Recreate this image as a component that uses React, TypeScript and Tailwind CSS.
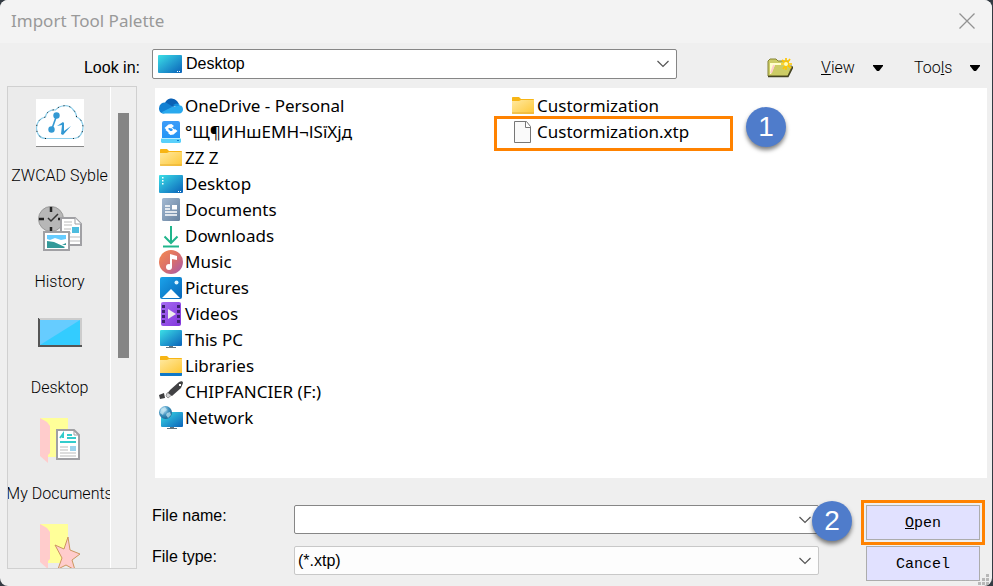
import type { ReactNode } from "react";

function Chevron() {
    return (
        <svg className="absolute right-2 top-1/2 -mt-1 h-2 w-3 pointer-events-none" viewBox="0 0 12 8" fill="none" stroke="#555" strokeWidth="1.2">
            <path d="M.5 1 6 6.500 11.500 1" />
        </svg>
    );
}

function Caret() {
    return (
        <svg className="h-[6px] w-[10px]" viewBox="0 0 10 6">
            <path d="M0 0h10v1L6 6H4L0 1z" fill="#000" />
        </svg>
    );
}

function Badge({ children, className }: { children: ReactNode; className: string }) {
    return (
        <span className={`absolute z-10 flex size-10 items-center justify-center rounded-full bg-[#4f7ccb] text-[28px] leading-10 text-white shadow-[0_3px_4px_rgba(0,0,0,0.5)] ${className}`}>
            {children}
        </span>
    );
}

function Gradients() {
    return (
        <svg className="absolute size-0" aria-hidden="true">
            <defs>
                <linearGradient id="screen" x1="0" y1="0" x2="1" y2="1">
                    <stop offset="0" stopColor="#3be0e6" />
                    <stop offset=".5" stopColor="#239fd1" />
                    <stop offset="1" stopColor="#0a62b8" />
                </linearGradient>
                <linearGradient id="folder" x1="0" y1="0" x2="1" y2="1">
                    <stop offset="0" stopColor="#ffe9a0" />
                    <stop offset="1" stopColor="#fdc736" />
                </linearGradient>
                <linearGradient id="music" x1="0" y1="0" x2="1" y2="1">
                    <stop offset="0" stopColor="#f58a50" />
                    <stop offset=".5" stopColor="#da7069" />
                    <stop offset="1" stopColor="#a658b0" />
                </linearGradient>
                <linearGradient id="pictures" x1="0" y1="0" x2="1" y2="1">
                    <stop offset="0" stopColor="#1ba3ea" />
                    <stop offset="1" stopColor="#0866b8" />
                </linearGradient>
                <linearGradient id="video" x1="0" y1="0" x2="1" y2="1">
                    <stop offset="0" stopColor="#a66bf2" />
                    <stop offset="1" stopColor="#8236dc" />
                </linearGradient>
                <linearGradient id="document" x1="0" y1="0" x2="1" y2="1">
                    <stop offset="0" stopColor="#a3b9d2" />
                    <stop offset="1" stopColor="#67829f" />
                </linearGradient>
                <linearGradient id="drive" x1="0" y1="0" x2="0" y2="1">
                    <stop offset="0" stopColor="#3e9cf8" />
                    <stop offset="1" stopColor="#1b93f5" />
                </linearGradient>
                <radialGradient id="globe" cx=".35" cy=".3" r=".8">
                    <stop offset="0" stopColor="#c9eafa" />
                    <stop offset=".5" stopColor="#3f91bd" />
                    <stop offset="1" stopColor="#125b8c" />
                </radialGradient>
            </defs>
        </svg>
    );
}

const icons: Record<string, ReactNode> = {
    onedrive: (
        <>
            <path d="M6 9a7 7 0 0 1 12-2l2 3-6 3-9-3z" fill="#0a61b5" />
            <path d="M7 8.500a6 6 0 0 0-7 6c0 3 2 5 5 5l10-6z" fill="#1180d3" />
            <path d="m14 11 3-1.500a5 5 0 0 1 4 1.500l-2 3z" fill="#1590df" />
            <path d="m3 18 10-5 8-1.500c2 0 3 2 3 4 0 2-1.500 4-4 4H5c-1 0-2-.5-2-1.500z" fill="#29a9ee" />
        </>
    ),
    drive: (
        <>
            <rect x="3" y="1" width="18" height="21" rx="2" fill="url(#drive)" />
            <path d="M2 18h20v4l-1 1H3l-1-1z" fill="#59d0fb" />
            <path d="M2 18h20v1H2z" fill="#b5ecff" />
            <path d="m12.500 4 2.500 2-2.500 2H10l-2 2-2.500-2 4-3.500zM11.500 15 9 13l2.500-2H14l2-2 2.500 2-4 3.500z" fill="#fff" />
            <path d="m12.500 7 4.500 4-1.500 1.500-4.500-4zM8 8l5 4.500-1.500 1.500-5-4z" fill="#fff" />
            <path d="m12 8 2 1.500-2 1.500-2-1.500z" fill="#2f98f6" />
            <path d="M18 20h2v1h-2z" fill="#087cce" />
        </>
    ),
    folder: (
        <>
            <path d="M1 4c0-.7.500-1 1-1h6l2 2h12c.6 0 1 .4 1 1v5H1z" fill="#f7b515" />
            <path d="M1 7h7l2-1h13v13c0 .6-.4 1-1 1H2c-.6 0-1-.4-1-1z" fill="url(#folder)" />
            <path d="M1 19h22" stroke="#e6ae32" />
        </>
    ),
    desktop: (
        <>
            <rect y="3" width="24" height="18" rx="1" fill="url(#screen)" />
            <path d="M3 5h1.500v1.500H3zm0 3h1.500v1.500H3zm0 3h1.500v1.500H3zM19 19h1v1h-1zm2 0h1v1h-1z" fill="#fff" />
        </>
    ),
    documents: (
        <>
            <rect x="3" width="18" height="23" rx="1.500" fill="url(#document)" />
            <path d="M6 8h5M6 11h5M6 14h12M6 17h12" stroke="#fff" strokeWidth="1.300" />
            <path d="M13 7h5v4.500h-5z" fill="#fff" />
        </>
    ),
    downloads: <path d="M12 2v17M5.500 12.500 12 19l6.500-6.500M4 22.500h16" fill="none" stroke="#20b58c" strokeWidth="2" />,
    music: (
        <>
            <circle cx="12" cy="12" r="12" fill="url(#music)" />
            <circle cx="10" cy="17" r="3" fill="#fff" />
            <path d="M11 17V4l7 2v4l-5-1v8z" fill="#fff" />
        </>
    ),
    pictures: (
        <>
            <rect x="1" y="1" width="22" height="22" rx="2" fill="url(#pictures)" />
            <path d="m3 22 9-9 9 9z" fill="#fff" />
            <circle cx="17.500" cy="6.500" r="2" fill="#dff5ff" />
        </>
    ),
    videos: (
        <>
            <rect x="2" width="20" height="24" rx="2" fill="url(#video)" />
            <path d="M3 3h3v3H3zm0 5h3v3H3zm0 5h3v3H3zm0 5h3v3H3zM18 3h3v3h-3zm0 5h3v3h-3zm0 5h3v3h-3zm0 5h3v3h-3z" fill="#3d2372" />
            <path d="m9 7 8 5-8 5z" fill="#eee" />
        </>
    ),
    pc: (
        <>
            <rect x="1" y="2" width="22" height="16" rx="1" fill="url(#screen)" />
            <path d="M10 18h4v1h3v1H7v-1h3z" fill="#62727d" />
        </>
    ),
    libraries: (
        <>
            <path d="M1 3c0-.7.500-1 1-1h6l2 2h12c.6 0 1 .4 1 1v5H1z" fill="#f7b515" />
            <path d="M1 6h7l2-1h13v14H1z" fill="url(#folder)" />
            <path d="M1 19h22v2c0 .6-.4 1-1 1H2c-.6 0-1-.4-1-1z" fill="#0f78c8" />
        </>
    ),
    usb: (
        <>
            <path d="m0 15 5-2 1 5-5 1z" fill="#3e3e40" />
            <path d="m8 13 4-2 2 3-5 4-2-2z" fill="#d1d1d3" stroke="#777" strokeWidth=".7" />
            <path d="m11 10 9-8c2-1 4-1 4 1l-2 5-9 8-4-3z" fill="#424244" />
            <path d="M20 4h2v2h-2z" fill="#fff" />
        </>
    ),
    network: (
        <>
            <rect x="2" y="6" width="22" height="15" rx="1" fill="url(#screen)" />
            <path d="M11 21h4v1h3v1H8v-1h3z" fill="#62727d" />
            <circle cx="6.500" cy="6.500" r="6.500" fill="url(#globe)" />
            <path d="m2 3 4-2 2 3-3 2-1 3-3-2zM8 7l3-1 1 3-3 3-2-3z" fill="#c6e7f2" opacity=".7" />
        </>
    ),
    file: (
        <path d="M3.500 1.500h12l4 5v16h-16zm11 0v6h5" fill="#fafafa" stroke="#777" />
    ),
};

function FileIcon({ name }: { name: string }) {
    return (
        <svg className="size-6 shrink-0" viewBox="0 0 24 24" aria-hidden="true">
            {icons[name]}
        </svg>
    );
}

const places = [
    { icon: "onedrive", name: "OneDrive - Personal" },
    { icon: "drive", name: "°Щ¶ИНшЕМН¬ІЅїХјд" },
    { icon: "folder", name: "ZZ Z" },
    { icon: "desktop", name: "Desktop" },
    { icon: "documents", name: "Documents" },
    { icon: "downloads", name: "Downloads" },
    { icon: "music", name: "Music" },
    { icon: "pictures", name: "Pictures" },
    { icon: "videos", name: "Videos" },
    { icon: "pc", name: "This PC" },
    { icon: "libraries", name: "Libraries" },
    { icon: "usb", name: "CHIPFANCIER (F:)" },
    { icon: "network", name: "Network" },
];

const sideFolder = (
    <>
        <path d="M4 1h28v39H12z" fill="#ff9" />
        <path d="m4 1 7 4 3 4v27l-2 2v8l-8-7z" fill="#fcc" />
    </>
);

const shortcuts = [
    {
        name: "ZWCAD Syble",
        icon: (
            <>
                <path d="M0 0h48v48H0z" fill="#fff" />
                <path d="M0 47.500h48" stroke="#888" />
                <path d="M10 39.500C4 39.500.5 35 .5 29c0-6 4-10 9-11 0-4 5-8 10-7 4-5 13-6 17-1 3 3 4 5 4 8 4 1 6.500 6 6.500 10 0 7-4 11.500-10 11.500z" fill="#fff" stroke="#8fd0ec" strokeWidth="1.200" />
                <path d="M10 39.500C4 39.500.5 35 .5 29c0-6 4-10 9-11 0-4 5-8 10-7 4-5 13-6 17-1 3 3 4 5 4 8 4 1 6.500 6 6.500 10 0 7-4 11.500-10 11.500" fill="none" stroke="#111" strokeDasharray="1 5" />
                <path d="m20.500 17-5 14" fill="none" stroke="#3399d3" strokeWidth="1.600" />
                <path d="m21 27 6-4 1 1v8l7-5-8 9-2-1 1-9z" fill="#3399d3" />
                <circle cx="20.500" cy="16.500" r="3.200" fill="#3399d3" />
                <circle cx="15.500" cy="30.500" r="3.200" fill="#3399d3" />
            </>
        ),
    },
    {
        name: "History",
        icon: (
            <>
                <circle cx="15" cy="14" r="12.500" fill="#b7b7b7" stroke="#999" />
                <path d="M15 2v5M3 14h5M22 14h4M15 22v5" stroke="#222" strokeWidth="2.500" />
                <path d="m12 13 3 3 7-7" fill="none" stroke="#333" strokeWidth="1.500" />
                <path d="M25 13h14l6 6v21H25z" fill="#fff" stroke="#a0a0a4" strokeWidth="2" />
                <path d="M39 13v6h6" fill="#fff" stroke="#a0a0a4" />
                <path d="M28 17h8m-8 3h8m-8 4h7m-7 4h7m-2 4h11m-11 4h11" stroke="#bbb" />
                <path d="M36 22h7v6h-7z" fill="#4ebddf" />
                <path d="M8 27h25v18H8z" fill="#fff" stroke="#a0a0a4" strokeWidth="2" />
                <path d="M11 30h19v13H11z" fill="#fff" />
                <path d="M11 30h19v4l-5 1-6-2-5 2-3-1z" fill="#6cf" />
                <path d="m11 36 7 1 11 5-1 1H11zm15 4 4-2v2z" fill="#399" />
            </>
        ),
    },
    {
        name: "Desktop",
        icon: (
            <>
                <path d="M2 7h44v29H2z" fill="#555" />
                <path d="M3 7h43v28H3z" fill="#ccc" />
                <path d="M2 8h2v26h42v2H2z" fill="#555" />
                <path d="M4 9h40v25H4z" fill="#3cf" />
                <path d="M4 9h40L4 34z" fill="#6cf" />
            </>
        ),
    },
    {
        name: "My Documents",
        icon: (
            <>
                {sideFolder}
                <path d="M21 13h17l5 5v24H21z" fill="#fff" stroke="#a0a0a4" strokeWidth="2" />
                <path d="M38 13v5h5" fill="none" stroke="#a0a0a4" />
                <path d="m24 21 3-4v4m4-3h5m-5 3h9M24 25h16" fill="none" stroke="#3cc" strokeWidth="2" />
                <path d="M24 30h8m-8 3h8m-8 3h16m-16 3h16" stroke="#bbb" />
                <path d="M34 29h6v5h-6z" fill="#9bd3ed" />
            </>
        ),
    },
    {
        name: "",
        icon: (
            <>
                {sideFolder}
                <path d="m32 14 2 13 10 4-8 6 3 10-9-5-8 4 4-11-7-13 9 4z" fill="#fcc" stroke="#cc965f" />
            </>
        ),
    },
];

const buttonClass =
    "h-[35px] w-full border border-[#acacac] bg-[#e1e1ff] pt-[3px] font-['Liberation_Mono',monospace] text-[15px] text-black";

export default function App() {
    return (
        <div className="h-screen bg-[#343b43] pr-px font-['Liberation_Sans',Arial,sans-serif] text-base text-black">
            <Gradients />
            <div className="flex h-full flex-col overflow-hidden rounded-lg bg-[#efefef]">
                <header className="flex h-[43px] shrink-0 items-center justify-between bg-[#f3f3f3] pb-[2px] pl-[11px] pr-[17px]">
                    <h1 className="font-['Noto_Sans',sans-serif] text-[17px] text-[#999]">Import Tool Palette</h1>
                    <button type="button" aria-label="Close">
                        <svg className="size-4" viewBox="0 0 16 16" stroke="#929292" strokeWidth="1.300">
                            <path d="m.5.5 15 15m0-15-15 15" />
                        </svg>
                    </button>
                </header>

                <div className="flex h-[43px] shrink-0 items-center pb-px">
                    <label htmlFor="look-in" className="w-[152px] pr-3 pt-2 text-right">Look in:</label>
                    <div className="relative flex-1">
                        <select id="look-in" className="h-[30px] w-full appearance-none rounded-xs border border-[#868686] bg-white pl-[33px]">
                            <option>Desktop</option>
                        </select>
                        <svg className="pointer-events-none absolute left-[6px] top-[6px] h-[18px] w-6" viewBox="0 0 24 18">
                            <rect width="24" height="18" rx="1" fill="url(#screen)" />
                            <path d="M19 16h1v1h-1zm2 0h1v1h-1z" fill="#fff" />
                        </svg>
                        <Chevron />
                    </div>
                    <div className="flex w-[315px] items-center justify-end pr-3 pt-2 font-['Roboto',sans-serif] font-light">
                        <button type="button" aria-label="New folder" className="mr-7">
                            <svg className="h-5 w-[26px]" viewBox="0 0 26 20">
                                <path d="M1 18V3l2-2h6l2 2h10v5h4l-4 10z" fill="#cc6" stroke="#858335" />
                                <path d="M3 16V5h16v2H8L4 16z" fill="#ffc" />
                                <path d="m4 15 3-8" stroke="#fcc" strokeWidth="2" />
                                <path d="M1 18.500h20l5-10" fill="none" stroke="#444322" strokeWidth="1.500" />
                                <path d="M19 0v12M14 6h11M15 2l9 8M23 1l-7 10" stroke="#ffc600" strokeWidth="1.700" />
                                <circle cx="19" cy="6" r="2" fill="#ffffba" />
                            </svg>
                        </button>
                        <button type="button" className="mr-[31px] flex w-[62px] items-center justify-between">
                            <span><u>V</u>iew</span>
                            <Caret />
                        </button>
                        <button type="button" className="flex w-[66px] items-center justify-between">
                            <span>Too<u>l</u>s</span>
                            <Caret />
                        </button>
                    </div>
                </div>

                <div className="flex min-h-0 flex-1">
                    <nav className="mb-[17px] ml-[7px] flex w-[130px] shrink-0 overflow-hidden border border-[#d0d0d0]">
                        <div className="w-[103px] shrink-0 overflow-hidden border-r border-white bg-[#ebebeb] pl-px pt-3 font-['Roboto',sans-serif] font-light">
                            {shortcuts.map((item, index) => (
                                <button
                                    key={index}
                                    type="button"
                                    aria-label={item.name || "Favorites"}
                                    className="mb-[19px] flex w-full flex-col items-center gap-[19px] whitespace-nowrap leading-5"
                                >
                                    <svg className="size-12 shrink-0" viewBox="0 0 48 48">{item.icon}</svg>
                                    {item.name && <span>{item.name}</span>}
                                </button>
                            ))}
                        </div>
                        <div className="flex-1 pl-[7px] pt-[26px]">
                            <div className="h-[245px] w-[11px] bg-[#858585]"></div>
                        </div>
                    </nav>

                    <main className="ml-[15px] flex min-w-0 flex-1 flex-col">
                        <div className="ml-[3px] mr-[5px] mt-[2px] grid flex-1 grid-cols-[352px_1fr] bg-white pl-1 pt-[5px] font-['Noto_Sans',sans-serif] text-[17px]">
                            <ul>
                                {places.map((item) => (
                                    <li key={item.name} className="flex h-[26px] items-center gap-[2px] whitespace-nowrap">
                                        <FileIcon name={item.icon} />
                                        {item.name}
                                    </li>
                                ))}
                            </ul>
                            <ul>
                                <li className="flex h-[26px] items-center gap-[2px]">
                                    <FileIcon name="folder" />
                                    Custormization
                                </li>
                                <li className="relative flex h-[26px] items-center gap-[2px]">
                                    <FileIcon name="file" />
                                    Custormization.xtp
                                    <div className="absolute -left-[17px] -top-[3px] h-[35px] w-[239px] border-3 border-[#ff8200] font-['Liberation_Sans',sans-serif]">
                                        <Badge className="left-full -top-3 ml-4">1</Badge>
                                    </div>
                                </li>
                            </ul>
                        </div>

                        <form className="flex h-[108px] shrink-0 pt-[22px]">
                            <div className="flex-1">
                                <div className="mt-[5px] flex">
                                    <label htmlFor="file-name" className="w-[142px] leading-[22px]">File name:</label>
                                    <div className="relative flex-1">
                                        <input id="file-name" type="text" className="h-[29px] w-full rounded-xs border border-[#868686] bg-white pl-1 pr-8" />
                                        <Chevron />
                                        <Badge className="-right-[33px] -top-1">2</Badge>
                                    </div>
                                </div>
                                <div className="mt-3 flex">
                                    <label htmlFor="file-type" className="w-[142px] leading-[22px]">File type:</label>
                                    <div className="relative flex-1">
                                        <select id="file-type" className="h-[29px] w-full appearance-none rounded-xs border border-[#c8c8c8] bg-[#fdfdfd] pl-[3px]">
                                            <option>(*.xtp)</option>
                                        </select>
                                        <Chevron />
                                    </div>
                                </div>
                            </div>
                            <div className="relative ml-[42px] w-[131px]">
                                <div className="h-[45px] w-[124px] border-3 border-[#ff8200] p-[2px]">
                                    <button type="button" className={buttonClass}><u>O</u>pen</button>
                                </div>
                                <div className="mt-px w-[124px] px-[5px]">
                                    <button type="button" className={buttonClass}>Cancel</button>
                                </div>
                                <svg className="absolute bottom-0 right-0 size-4" viewBox="0 0 16 16" fill="#b8b8b8">
                                    <path d="M10 4h3v3h-3zM6 8h3v3H6zm4 0h3v3h-3zM2 12h3v3H2zm4 0h3v3H6zm4 0h3v3h-3z" />
                                </svg>
                            </div>
                        </form>
                    </main>
                </div>
            </div>
        </div>
    );
}
